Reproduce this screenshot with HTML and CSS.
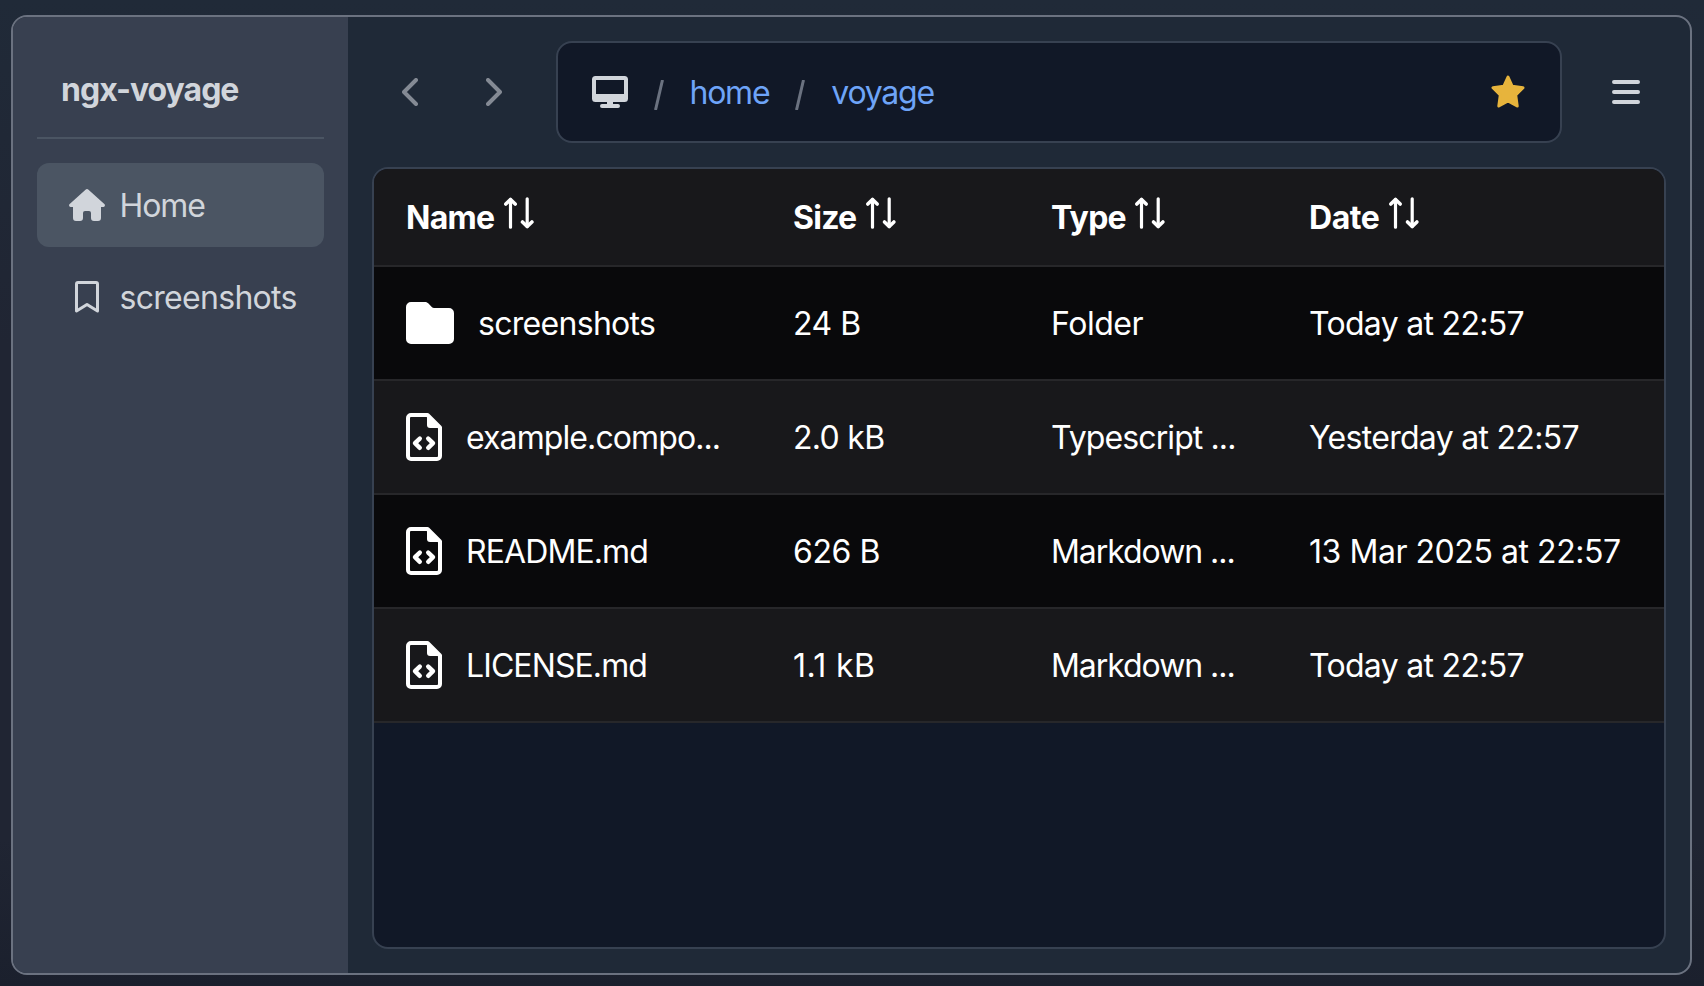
FILE: index.html
```html
<!DOCTYPE html>
<html lang="en">
<head>
<meta charset="utf-8">
<title>ngx-voyage</title>
<link rel="stylesheet" href="styles.css">
</head>
<body>
<svg class="sprite" aria-hidden="true">
  <symbol id="sort" viewBox="0 0 32 34">
    <path d="M7.500 31.200V3.500M24.200 2.800v27.700" fill="none" stroke="currentColor" stroke-width="3.200" stroke-linecap="round"/>
    <path d="M2.800 8l4.700-4.500L12.200 8M19.500 26l4.700 4.500 4.700-4.500" fill="none" stroke="currentColor" stroke-width="3.600" stroke-linecap="round" stroke-linejoin="round"/>
  </symbol>
  <symbol id="file" viewBox="0 0 36 48">
    <path d="M2 5a3 3 0 0 1 3-3h16.500L34 14.500V43a3 3 0 0 1-3 3H5a3 3 0 0 1-3-3z" fill="none" stroke="currentColor" stroke-width="4" stroke-linejoin="round"/>
    <path d="M21 2v10a3 3 0 0 0 3 3h11L22 1z" fill="currentColor"/>
    <path d="M13.800 25.600L9 30.200l4.800 4.600M22.200 25.600l4.800 4.600-4.800 4.600" fill="none" stroke="currentColor" stroke-width="4.400" stroke-linecap="round" stroke-linejoin="round"/>
  </symbol>
</svg>
<div class="app">
  <aside class="sidebar">
    <h1 class="title">ngx-voyage</h1>
    <nav class="places">
      <a class="place active"><svg class="place-icon" viewBox="0 0 36 32"><path d="M16.500.8a2.200 2.200 0 0 1 3 0L35.300 15a1.700 1.700 0 0 1-1.200 3H32v11a3 3 0 0 1-3 3h-4a3 3 0 0 1-3-3v-5a2 2 0 0 0-2-2h-4a2 2 0 0 0-2 2v5a3 3 0 0 1-3 3H7a3 3 0 0 1-3-3V18H1.900a1.700 1.700 0 0 1-1.200-3z" fill="currentColor"/></svg><span class="tight-4">Home</span></a>
      <a class="place"><svg class="place-icon" viewBox="0 0 36 32"><path d="M7.500 30V3a1.500 1.500 0 0 1 1.500-1.500h18A1.500 1.500 0 0 1 28.500 3v27L18 23.500z" fill="none" stroke="currentColor" stroke-width="3" stroke-linejoin="round"/></svg><span class="tight-2">screenshots</span></a>
    </nav>
  </aside>
  <main class="main">
    <header class="toolbar">
      <div class="history">
        <svg class="chevron" viewBox="0 0 16 28"><path d="M14 2L2 14l12 12"/></svg>
        <svg class="chevron" viewBox="0 0 16 28"><path d="M2 2l12 12L2 26"/></svg>
      </div>
      <div class="path">
        <svg class="monitor" viewBox="0 0 36 32"><path fill-rule="evenodd" d="M3.500 0h29A3.500 3.500 0 0 1 36 3.500v19a3.500 3.500 0 0 1-3.500 3.500H21v2h5a2 2 0 0 1 0 4H10a2 2 0 0 1 0-4h5v-2H3.500A3.500 3.500 0 0 1 0 22.500v-19A3.500 3.500 0 0 1 3.500 0zM4 4v14h28V4z" fill="currentColor"/></svg>
        <svg class="slash" viewBox="0 0 10 30"><path d="M8.500 0L1.500 30"/></svg>
        <a class="crumb">home</a>
        <svg class="slash" viewBox="0 0 10 30"><path d="M8.500 0L1.500 30"/></svg>
        <a class="crumb">voyage</a>
        <svg class="star" viewBox="0 0 34 33"><path d="M17 2l4.200 9.300L32 12.700l-7.300 7.300L26.200 31 17 26l-9.200 5L9.300 20 2 12.700l10.800-1.400z"/></svg>
      </div>
      <svg class="menu" viewBox="0 0 28 24"><path d="M2 2h24M2 12h24M2 22h24"/></svg>
    </header>
    <section class="table">
      <div class="row head">
        <div class="cell"><span class="tight-3">Name</span><svg class="sort"><use href="#sort"/></svg></div>
        <div class="cell"><span class="tight-3">Size</span><svg class="sort"><use href="#sort"/></svg></div>
        <div class="cell"><span class="tight-3">Type</span><svg class="sort"><use href="#sort"/></svg></div>
        <div class="cell"><span class="tight-1">Date</span><svg class="sort"><use href="#sort"/></svg></div>
      </div>
      <div class="row dark">
        <div class="cell"><svg class="folder" viewBox="0 0 48 42"><path d="M5 0h14c1.500 0 2.600.6 3.500 1.600L26 5.200c.6.600 1.200.8 2 .8h15a5 5 0 0 1 5 5v26a5 5 0 0 1-5 5H5a5 5 0 0 1-5-5V5a5 5 0 0 1 5-5z" fill="currentColor"/></svg><span class="tight-2">screenshots</span></div>
        <div class="cell"><span class="tight-1">24 B</span></div><div class="cell"><span class="tight-1">Folder</span></div><div class="cell"><span class="tight-2">Today at 22:57</span></div>
      </div>
      <div class="row">
        <div class="cell"><svg class="file"><use href="#file"/></svg><span class="tight-3">example.compo...</span></div>
        <div class="cell"><span class="tight-2">2.0 kB</span></div><div class="cell"><span class="tight-3">Typescript ...</span></div><div class="cell"><span class="tight-2">Yesterday at 22:57</span></div>
      </div>
      <div class="row dark">
        <div class="cell"><svg class="file"><use href="#file"/></svg><span class="tight-3">README.md</span></div>
        <div class="cell"><span class="tight-1">626 B</span></div><div class="cell"><span class="tight-4">Markdown ...</span></div><div class="cell"><span class="tight-1">13 Mar 2025 at 22:57</span></div>
      </div>
      <div class="row">
        <div class="cell"><svg class="file"><use href="#file"/></svg><span class="tight-3">LICENSE.md</span></div>
        <div class="cell"><span class="loose">1.1 kB</span></div><div class="cell"><span class="tight-4">Markdown ...</span></div><div class="cell"><span class="tight-2">Today at 22:57</span></div>
      </div>
    </section>
  </main>
</div>
</body>
</html>
```
FILE: styles.css
```css
* { box-sizing: border-box; }
body { margin: 0; width: 1704px; height: 986px; overflow: hidden; padding: 15px 12px 11px 11px; background: linear-gradient(#202a38, #202533 35%, #202533 85%, #1b202d); font: 440 32px/48px Inter, "Liberation Sans", sans-serif; color: #fff; }
.sprite { position: absolute; width: 0; height: 0; }
svg { display: block; flex: none; }
.app { display: flex; height: 960px; border: 2px solid #6b7280; border-radius: 16px; overflow: hidden; background: #1f2937; }
.sidebar { width: 335px; flex: none; padding: 24px; background: #384050; color: #d1d5db; }
.title { margin: 0 0 24px; height: 98px; padding: 25px 24px 0; border-bottom: 2px solid #4b5563; font-size: 32px; font-weight: 700; line-height: 48px; letter-spacing: -1px; }
.places { display: flex; flex-direction: column; gap: 8px; }
.place { display: flex; align-items: center; gap: 14.5px; height: 84px; padding: 0 32px; border-radius: 12px; }
.place span, .cell span { padding-top: 2px; }
.place.active { background: #4b5563; }
.place-icon { width: 36px; height: 32px; }
.main { flex: 1; min-width: 0; display: flex; flex-direction: column; gap: 24px; padding: 24px; }
.toolbar { display: flex; align-items: center; height: 102px; }
.history { display: flex; gap: 68px; width: 184px; padding-left: 30px; }
.chevron { width: 16px; height: 28px; }
.chevron path { fill: none; stroke: #848a94; stroke-width: 4; stroke-linecap: round; stroke-linejoin: round; }
.path { display: flex; align-items: center; width: 1006px; height: 102px; padding: 0 34px; border: 2px solid #374151; border-radius: 16px; background: #111827; }
.monitor { width: 36px; height: 32px; color: #d1d5db; }
.slash { width: 10px; height: 30px; margin: 6px 26px 0 25.5px; }
.slash path { stroke: #6b7280; stroke-width: 3; }
.crumb { padding: 2px 0.5px 0 0; color: #6ea4f8; letter-spacing: -1.25px; }
.star { width: 34px; height: 33px; margin: 0 1px 1px auto; }
.star path { fill: #e7b43c; stroke: #e7b43c; stroke-width: 3; stroke-linejoin: round; }
.menu { width: 28px; height: 24px; margin-left: 50px; }
.menu path { stroke: #d1d5db; stroke-width: 4; stroke-linecap: round; }
.table { flex: 1; border: 2px solid #374151; border-radius: 16px; overflow: hidden; background: #111827; }
.row { display: grid; grid-template-columns: 387px 258px 258px 387px; height: 114px; border-bottom: 2px solid #27272a; background: #18181b; }
.row.dark { background: #09090b; }
.row.head { height: 98px; font-weight: 700; }
.cell { display: flex; align-items: center; padding: 0 0 0 32px; white-space: nowrap; }
.tight-1 { letter-spacing: -0.45px; }
.tight-2 { letter-spacing: -0.7px; }
.tight-3 { letter-spacing: -0.9px; }
.row.head .tight-3 { letter-spacing: -0.75px; }
.tight-4 { letter-spacing: -1.05px; }
.loose { letter-spacing: 0.4px; }
.sort { width: 32px; height: 34px; margin: -8px 0 0 8.5px; }
.folder { width: 48px; height: 42px; margin-right: 24px; }
.file { width: 36px; height: 48px; margin-right: 24px; }
```
